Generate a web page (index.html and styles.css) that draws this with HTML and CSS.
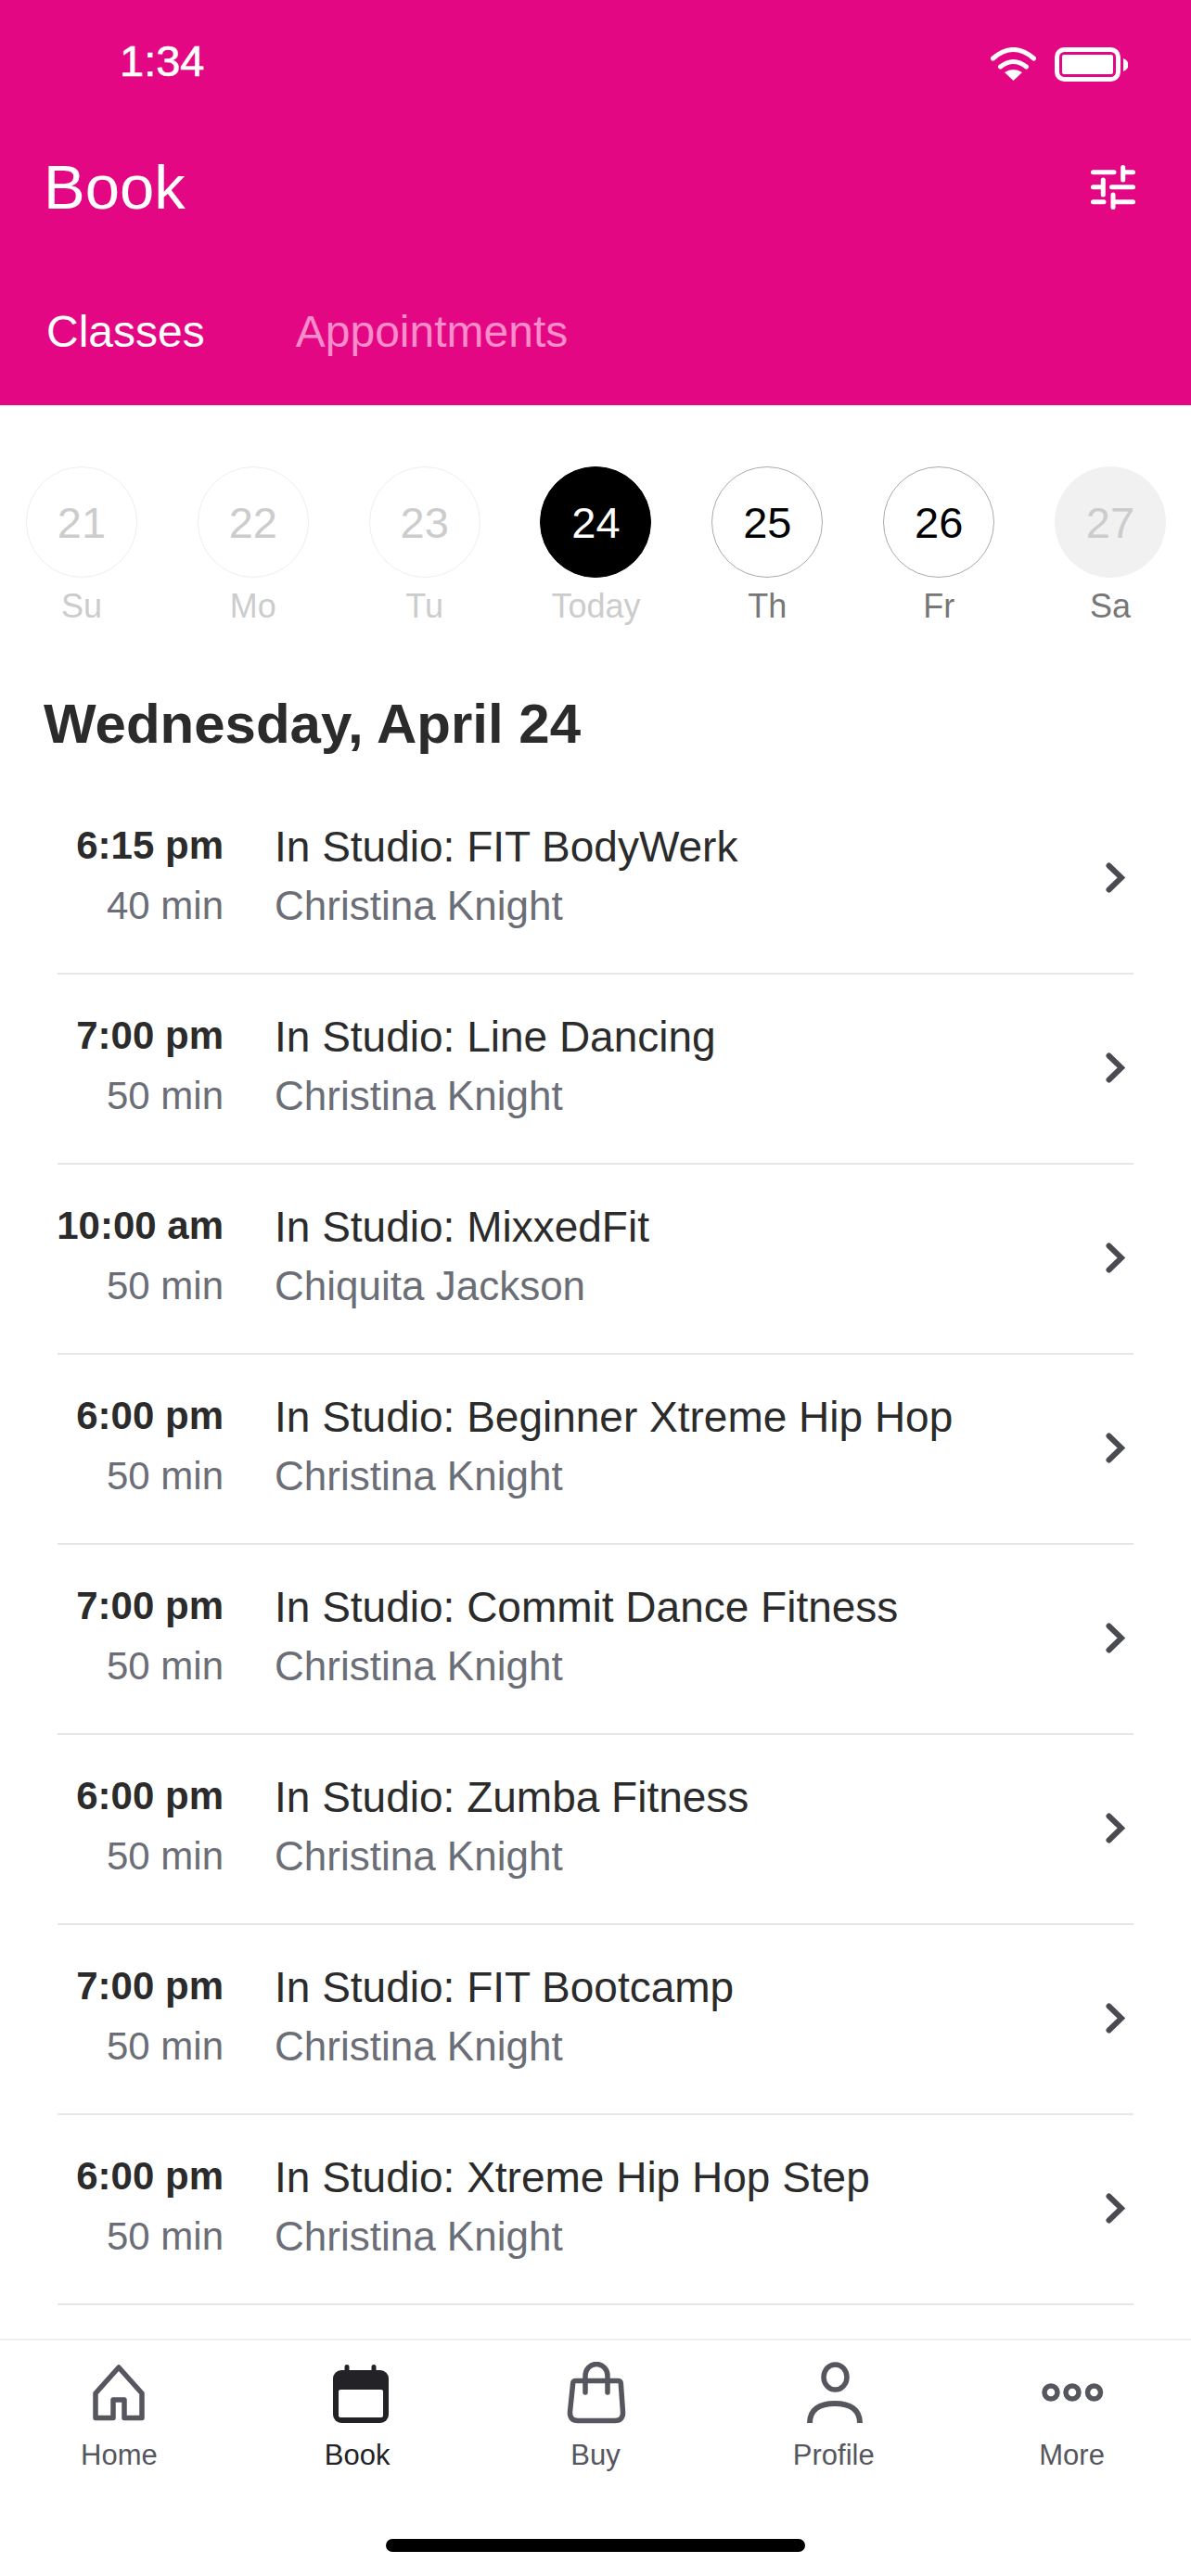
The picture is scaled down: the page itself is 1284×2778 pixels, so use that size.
FILE: index.html
```html
<!DOCTYPE html>
<html lang="en">
<head>
<meta charset="utf-8">
<title>Book</title>
<link rel="stylesheet" href="styles.css">
</head>
<body>
<div class="app">
  <header class="header">
    <div class="status">
      <span class="clock">1:34</span>
      <div class="status-icons">
        <svg class="wifi" viewBox="0 0 49 36"><path d="M2.5 12Q24.5-7 46.5 12M10.5 21Q24.5 10 38.5 21" fill="none" stroke="#fff" stroke-width="5" stroke-linecap="round"/><path d="M24.5 36L15 27Q24.5 21 34 27Z" fill="#fff"/></svg>
        <svg class="battery" viewBox="0 0 79 37"><rect x="2.5" y="2.5" width="66" height="32" rx="8" fill="none" stroke="#fff" stroke-width="5"/><rect x="8" y="8" width="55" height="21" rx="2" fill="#fff"/><path d="M74 12Q79.5 14 79.5 19Q79.5 24 74 26Z" fill="#fff"/></svg>
      </div>
    </div>
    <div class="nav">
      <h1 class="nav-title">Book</h1>
      <svg class="sliders" viewBox="0 0 48 48"><path d="M2.5 7.7H25M34.7 2.5V16M34.7 7.7H45.5M2.5 23.7H13.3M13.3 16V32M22.5 23.7H45.5M2.5 39.7H14M24 32V45.5M24 39.7H45.5" fill="none" stroke="#fff" stroke-width="5" stroke-linecap="round"/></svg>
    </div>
    <div class="tabs">
      <span class="tab tab-on">Classes</span>
      <span class="tab tab-off">Appointments</span>
    </div>
  </header>

  <div class="days">
    <div class="day past"><span class="circle">21</span><span class="day-label">Su</span></div>
    <div class="day past"><span class="circle">22</span><span class="day-label">Mo</span></div>
    <div class="day past"><span class="circle">23</span><span class="day-label">Tu</span></div>
    <div class="day today"><span class="circle">24</span><span class="day-label">Today</span></div>
    <div class="day"><span class="circle">25</span><span class="day-label">Th</span></div>
    <div class="day"><span class="circle">26</span><span class="day-label">Fr</span></div>
    <div class="day off"><span class="circle">27</span><span class="day-label">Sa</span></div>
  </div>

  <h2 class="date">Wednesday, April 24</h2>

  <main class="list">
    <div class="row"><div class="when"><b>6:15 pm</b><span>40 min</span></div><div class="what"><div class="name">In Studio: FIT BodyWerk</div><div class="who">Christina Knight</div></div><svg class="chev" viewBox="0 0 21 33"><path d="M3.5 3.5L17 16.5L3.5 29.5"/></svg></div>
    <div class="row"><div class="when"><b>7:00 pm</b><span>50 min</span></div><div class="what"><div class="name">In Studio: Line Dancing</div><div class="who">Christina Knight</div></div><svg class="chev" viewBox="0 0 21 33"><path d="M3.5 3.5L17 16.5L3.5 29.5"/></svg></div>
    <div class="row"><div class="when"><b>10:00 am</b><span>50 min</span></div><div class="what"><div class="name">In Studio: MixxedFit</div><div class="who">Chiquita Jackson</div></div><svg class="chev" viewBox="0 0 21 33"><path d="M3.5 3.5L17 16.5L3.5 29.5"/></svg></div>
    <div class="row"><div class="when"><b>6:00 pm</b><span>50 min</span></div><div class="what"><div class="name">In Studio: Beginner Xtreme Hip Hop</div><div class="who">Christina Knight</div></div><svg class="chev" viewBox="0 0 21 33"><path d="M3.5 3.5L17 16.5L3.5 29.5"/></svg></div>
    <div class="row"><div class="when"><b>7:00 pm</b><span>50 min</span></div><div class="what"><div class="name">In Studio: Commit Dance Fitness</div><div class="who">Christina Knight</div></div><svg class="chev" viewBox="0 0 21 33"><path d="M3.5 3.5L17 16.5L3.5 29.5"/></svg></div>
    <div class="row"><div class="when"><b>6:00 pm</b><span>50 min</span></div><div class="what"><div class="name">In Studio: Zumba Fitness</div><div class="who">Christina Knight</div></div><svg class="chev" viewBox="0 0 21 33"><path d="M3.5 3.5L17 16.5L3.5 29.5"/></svg></div>
    <div class="row"><div class="when"><b>7:00 pm</b><span>50 min</span></div><div class="what"><div class="name">In Studio: FIT Bootcamp</div><div class="who">Christina Knight</div></div><svg class="chev" viewBox="0 0 21 33"><path d="M3.5 3.5L17 16.5L3.5 29.5"/></svg></div>
    <div class="row"><div class="when"><b>6:00 pm</b><span>50 min</span></div><div class="what"><div class="name">In Studio: Xtreme Hip Hop Step</div><div class="who">Christina Knight</div></div><svg class="chev" viewBox="0 0 21 33"><path d="M3.5 3.5L17 16.5L3.5 29.5"/></svg></div>
  </main>

  <footer class="tabbar">
    <div class="bar-items">
      <div class="bar-item">
        <svg class="bar-icon" viewBox="0 0 72 68"><path class="line" d="M36 6L11 34V60.5H30V41H42V60.5H61V34Z"/></svg>
        <span>Home</span>
      </div>
      <div class="bar-item active">
        <svg class="bar-icon" viewBox="0 0 72 68"><rect x="10" y="9" width="60" height="57" rx="9" fill="#232327"/><rect x="16" y="30" width="48" height="30" rx="2" fill="#fff"/><path d="M25 5.5V12M54 5.5V12" stroke="#232327" stroke-width="5" stroke-linecap="round"/></svg>
        <span>Book</span>
      </div>
      <div class="bar-item">
        <svg class="bar-icon" viewBox="0 0 72 68"><path class="line" d="M15 20.5H60Q63 20.5 63.3 23L65.5 54Q66 63.5 57 63.5H17Q8 63.5 8.5 54L11.7 23Q12 20.5 15 20.5Z"/><path class="line" d="M25 33V15A12 12.5 0 0 1 49 15V33"/></svg>
        <span>Buy</span>
      </div>
      <div class="bar-item">
        <svg class="bar-icon" viewBox="0 0 72 68"><ellipse class="line" cx="37.5" cy="16.5" rx="12.5" ry="13.5"/><path class="line butt" d="M10 66C10 52 20 45 37 45C54 45 64 52 64 66"/></svg>
        <span>Profile</span>
      </div>
      <div class="bar-item">
        <svg class="bar-icon" viewBox="0 0 72 68"><circle class="line" cx="13" cy="33" r="7"/><circle class="line" cx="36" cy="33" r="7"/><circle class="line" cx="59.5" cy="33" r="7"/></svg>
        <span>More</span>
      </div>
    </div>
    <div class="home-indicator"></div>
  </footer>
</div>
</body>
</html>
```
FILE: styles.css
```css
* { box-sizing: border-box; }
html, body { margin: 0; padding: 0; background: #fff; }
body { font-family: "Liberation Sans", Arial, sans-serif; color: #2b2b2b; }
.app { width: 1284px; height: 2778px; display: flex; flex-direction: column; overflow: hidden; }

.header { height: 437px; background: #e40784; color: #fff; flex: none; }
.status { height: 132px; display: flex; align-items: center; justify-content: space-between; padding: 0 68px 0 129px; }
.clock { font-size: 47px; line-height: 56px; -webkit-text-stroke: 0.6px #fff; }
.status-icons { display: flex; align-items: center; gap: 20px; padding-top: 6px; }
.wifi { width: 49px; height: 36px; display: block; }
.battery { width: 79px; height: 37px; display: block; }
.nav { height: 140px; display: flex; align-items: center; justify-content: space-between; padding: 0 60px 0 47px; }
.nav-title { margin: 0; font-size: 67px; line-height: 76px; font-weight: 400; }
.sliders { width: 48px; height: 48px; display: block; }
.tabs { display: flex; gap: 98px; padding: 58px 0 0 50px; }
.tab { font-size: 48px; line-height: 56px; }
.tab-off { color: #f98ccb; }

.days { display: flex; justify-content: space-between; padding: 66px 27px 0 28px; flex: none; }
.day { width: 120px; display: flex; flex-direction: column; align-items: center; color: #777; }
.circle { width: 120px; height: 120px; border-radius: 50%; border: 1.5px solid #aaa; display: flex; align-items: center; justify-content: center; font-size: 47px; color: #000; }
.day-label { margin-top: 9px; font-size: 36px; line-height: 44px; white-space: nowrap; }
.past .circle { border-color: #eee; color: #ccc; }
.past .day-label, .today .day-label { color: #ccc; }
.today .circle { background: #000; border-color: #000; color: #fff; }
.off .circle { background: #f1f1f1; border-color: #f1f1f1; color: #ccc; }

.date { margin: 70px 0 30px; padding-left: 47px; font-size: 60px; line-height: 70px; font-weight: 700; color: #2b2b2b; flex: none; }

.list { flex: 1; padding: 0 62px; }
.row { height: 205px; border-bottom: 2px solid #e6e6e6; display: flex; align-items: center; padding: 0 9px 6px 0; }
.when { width: 179px; flex: none; display: flex; flex-direction: column; align-items: flex-end; font-size: 42px; line-height: 64px; white-space: nowrap; }
.when b { font-weight: 700; color: #2b2b2b; }
.when span { color: #6b6e76; margin-top: 1px; }
.what { flex: 1; padding-left: 55px; line-height: 64px; }
.name { font-size: 46px; color: #2b2b2b; }
.who { font-size: 44px; color: #6b6e76; }
.chev { width: 21px; height: 33px; flex: none; margin-top: 4px; }
.chev path { fill: none; stroke: #4a4b50; stroke-width: 6; stroke-linecap: round; }

.tabbar { height: 256px; border-top: 2px solid #efefef; flex: none; display: flex; flex-direction: column; align-items: center; }
.bar-items { width: 100%; display: grid; grid-template-columns: repeat(5, 1fr); padding-top: 23px; }
.bar-item { display: flex; flex-direction: column; align-items: center; color: #55565e; font-size: 31px; line-height: 40px; }
.bar-item.active { color: #232327; }
.bar-icon { width: 72px; height: 68px; display: block; margin-bottom: 13px; }
.line { fill: none; stroke: #55565e; stroke-width: 5.5; stroke-linejoin: round; stroke-linecap: round; }
.butt { stroke-linecap: butt; stroke-width: 6; }
.home-indicator { width: 452px; height: 14px; border-radius: 7px; background: #000; margin-top: 70px; }
```
